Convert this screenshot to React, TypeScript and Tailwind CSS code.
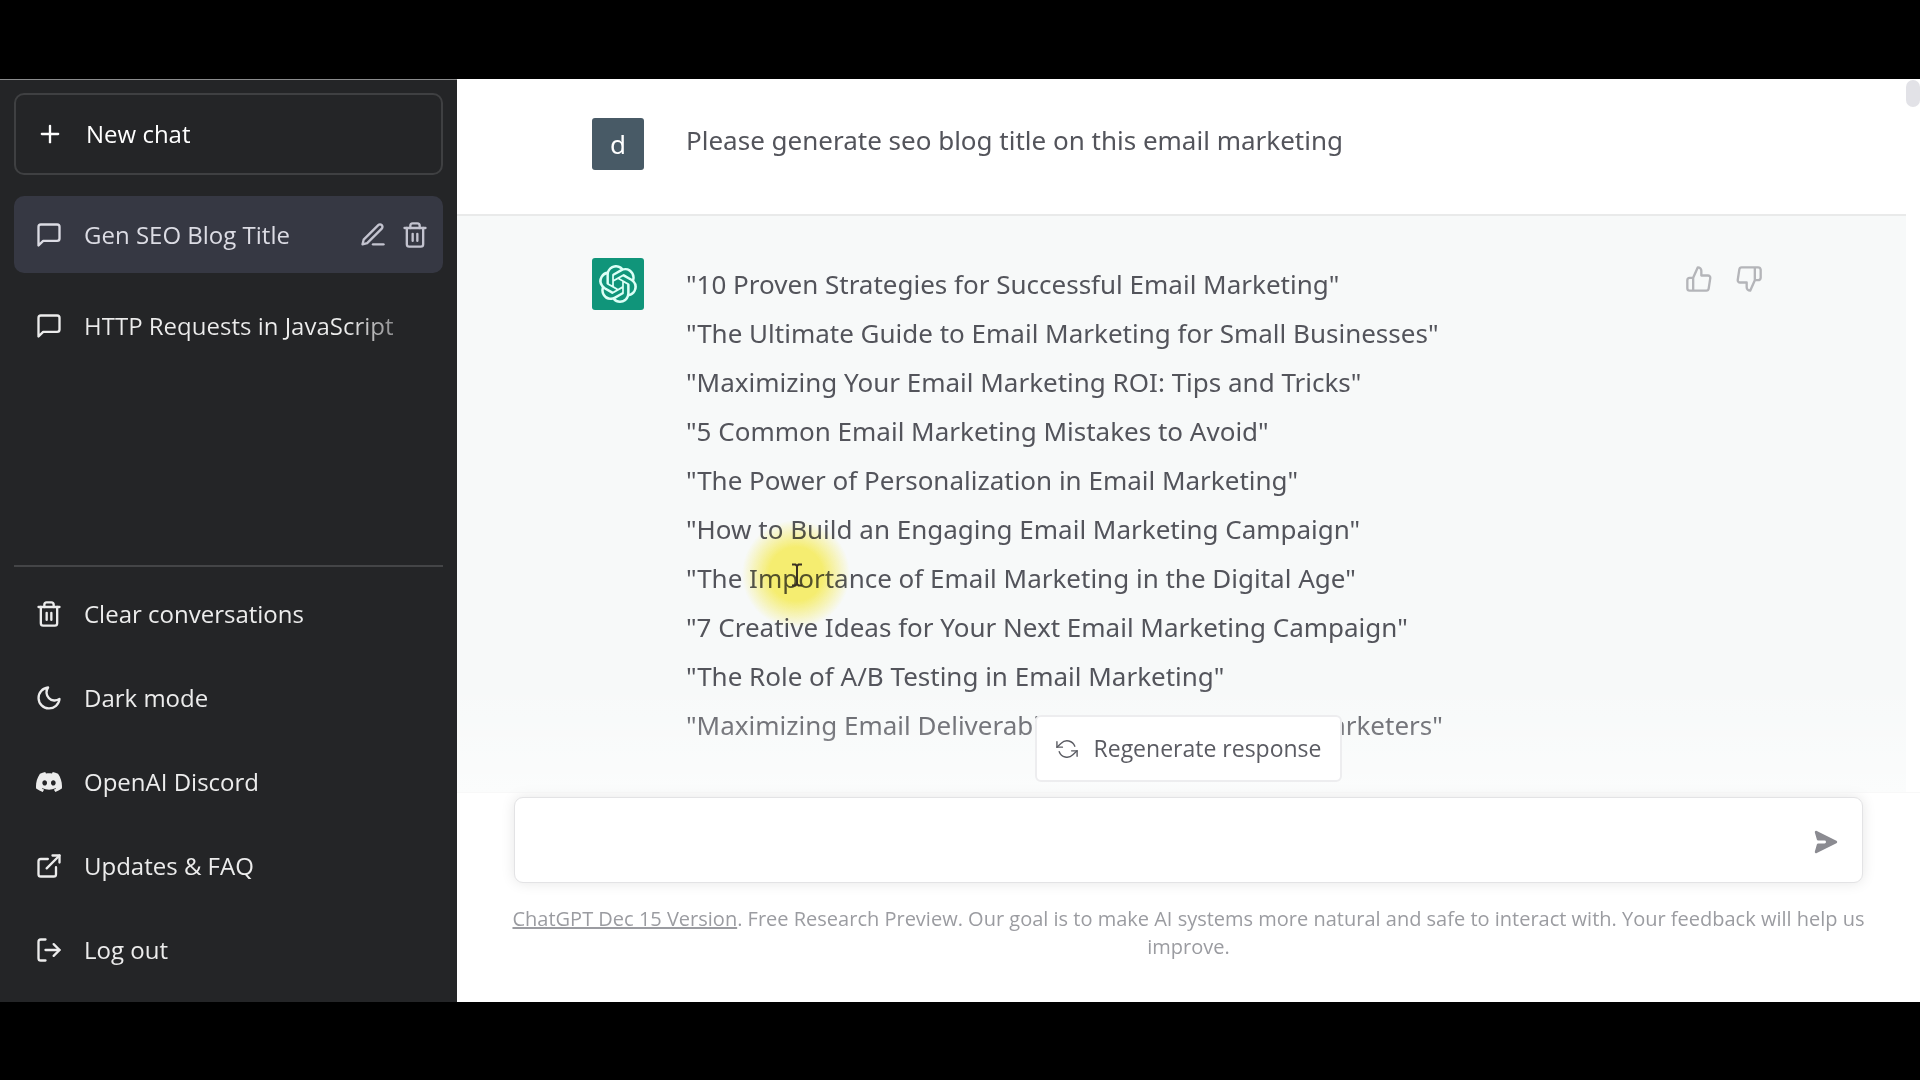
import { ReactNode } from 'react';
import {
    FiEdit3,
    FiExternalLink,
    FiLogOut,
    FiMessageSquare,
    FiMoon,
    FiPlus,
    FiRefreshCcw,
    FiThumbsDown,
    FiThumbsUp,
    FiTrash2,
} from 'react-icons/fi';
import { HiPaperAirplane } from 'react-icons/hi';
import { SiDiscord, SiOpenai } from 'react-icons/si';

const titles = [
    '"10 Proven Strategies for Successful Email Marketing"',
    '"The Ultimate Guide to Email Marketing for Small Businesses"',
    '"Maximizing Your Email Marketing ROI: Tips and Tricks"',
    '"5 Common Email Marketing Mistakes to Avoid"',
    '"The Power of Personalization in Email Marketing"',
    '"How to Build an Engaging Email Marketing Campaign"',
    '"The Importance of Email Marketing in the Digital Age"',
    '"7 Creative Ideas for Your Next Email Marketing Campaign"',
    '"The Role of A/B Testing in Email Marketing"',
    '"Maximizing Email Deliverability: Best Practices for Marketers"',
];

const menuItems = [
    { label: 'Clear conversations', icon: <FiTrash2 size={28} /> },
    { label: 'Dark mode', icon: <FiMoon size={28} /> },
    { label: 'OpenAI Discord', icon: <SiDiscord size={26} /> },
    { label: 'Updates & FAQ', icon: <FiExternalLink size={28} /> },
    { label: 'Log out', icon: <FiLogOut size={28} /> },
];

function IconSlot({ children }: { children: ReactNode }) {
    return <span className="flex w-7 flex-shrink-0 justify-center">{children}</span>;
}

function Sidebar() {
    return (
        <aside className="flex w-[457px] flex-shrink-0 flex-col border-t border-[#8a8b8c] bg-[#242527] px-[14px] pb-[10px] pt-[13px] text-2xl text-[#ececec]">
            <button className="flex h-[82px] items-center gap-[22px] rounded-[10px] border-2 border-[#3f4042] px-5 text-white">
                <IconSlot><FiPlus size={28} /></IconSlot>
                New chat
            </button>

            <nav className="mt-[21px] flex flex-col gap-[14px]">
                <div className="flex h-[77px] items-center rounded-[10px] bg-[#363843] px-[21px] text-[#dcdce4]">
                    <a href="#seo" className="flex flex-1 items-center gap-[21px]">
                        <IconSlot><FiMessageSquare size={28} /></IconSlot>
                        Gen SEO Blog Title
                    </a>
                    <div className="-mr-[7px] flex gap-[14px] text-[#c3c3cf]">
                        <button aria-label="Rename"><FiEdit3 size={28} /></button>
                        <button aria-label="Delete"><FiTrash2 size={28} /></button>
                    </div>
                </div>
                <a href="#http" className="flex h-[77px] items-center gap-[21px] px-[21px]">
                    <IconSlot><FiMessageSquare size={28} /></IconSlot>
                    <span className="bg-gradient-to-r from-[#ececec] from-85% to-[#8e8e90] bg-clip-text text-transparent">
                        HTTP Requests in JavaScript
                    </span>
                </a>
            </nav>

            <div className="mt-auto flex flex-col border-t-2 border-[#444547] pt-[5px]">
                {menuItems.map((item) => (
                    <a key={item.label} href="#menu" className="flex h-[84px] items-center gap-[21px] px-[21px]">
                        <IconSlot>{item.icon}</IconSlot>
                        {item.label}
                    </a>
                ))}
            </div>
        </aside>
    );
}

function Conversation() {
    return (
        <div className="min-h-0 flex-1 overflow-hidden font-['Noto_Sans',sans-serif] text-[26px] leading-[49px] text-[#53545b]">
            <section className="flex h-[137px] items-start gap-[42px] border-b-2 border-[#e9eaea] px-[135px] pt-[39px]">
                <div className="flex size-[52px] items-center justify-center rounded-[3px] bg-[#485a66] text-white">d</div>
                <p className="-mt-0.5">Please generate seo blog title on this email marketing</p>
            </section>
            <section className="flex min-h-full items-start bg-[#f7f9f9] px-[135px] pt-[42px]">
                <div className="flex size-[52px] flex-shrink-0 items-center justify-center rounded-[3px] bg-[#10957a] text-[#dcfff6]">
                    <SiOpenai size={38} />
                </div>
                <div className="ml-[42px] mt-0.5 flex-1 whitespace-nowrap">
                    {titles.map((title) => (
                        <p key={title}>{title}</p>
                    ))}
                </div>
                <div className="mr-2 mt-[7px] flex gap-[22px] text-[#b4b5b9]">
                    <button aria-label="Good response"><FiThumbsUp size={28} /></button>
                    <button aria-label="Bad response"><FiThumbsDown size={28} /></button>
                </div>
            </section>
        </div>
    );
}

function Composer() {
    return (
        <footer className="relative border-t border-[#f1f1f2] pb-[41px] pt-1">
            <div className="pointer-events-none absolute inset-x-0 bottom-full h-28 bg-gradient-to-b from-white/0 to-white/50" />
            <button className="absolute bottom-full left-1/2 mb-[11px] flex h-[67px] -translate-x-1/2 items-center gap-4 whitespace-nowrap rounded-md border-2 border-[#ededef] bg-white px-[19px] text-[23px] text-[#5a5b62]">
                <FiRefreshCcw size={22} strokeWidth={1.5} />
                Regenerate response
            </button>
            <form
                className="mx-[57px] flex h-[86px] items-center rounded-[9px] border border-[#e3e3e5] bg-white pr-[22px] shadow-[0_0_14px_rgba(0,0,0,0.10)]"
                onSubmit={(e) => e.preventDefault()}
            >
                <input aria-label="Message" className="h-full flex-1 bg-transparent px-6 text-2xl outline-none" />
                <button aria-label="Send" className="pt-1 text-[#8b8b91]">
                    <HiPaperAirplane size={28} className="rotate-90" />
                </button>
            </form>
            <p className="mx-[50px] mt-[22px] text-center text-xl leading-7 text-[#9b9ca1]">
                <a href="#notes" className="underline">ChatGPT Dec 15 Version</a>. Free Research Preview. Our goal is to make AI
                systems more natural and safe to interact with. Your feedback will help us improve.
            </p>
        </footer>
    );
}

export default function App() {
    return (
        <div className="relative flex h-screen bg-black pb-[78px] pt-[79px] font-['Open_Sans',sans-serif]">
            <Sidebar />
            <main className="flex min-w-0 flex-1 flex-col bg-white">
                <div className="flex min-h-0 flex-1">
                    <Conversation />
                    <div className="w-[14px] pt-px">
                        <div className="h-[27px] rounded-full bg-[#e2e2e7]" />
                    </div>
                </div>
                <Composer />
            </main>

            {/* mouse highlight */}
            <div className="pointer-events-none absolute left-[742px] top-[520px] size-[108px] rounded-full bg-[radial-gradient(closest-side,#fdf373_50%,transparent)] mix-blend-multiply" />
            <svg className="pointer-events-none absolute left-[791px] top-[563px]" width="12" height="24" viewBox="0 0 12 24" fill="none" stroke="#3a3020" strokeWidth="2">
                <path d="M1 1.5h3.5L6 3l1.500-1.500H11M6 3v18M1 22.500h3.500L6 21l1.500 1.500H11" />
            </svg>
        </div>
    );
}
